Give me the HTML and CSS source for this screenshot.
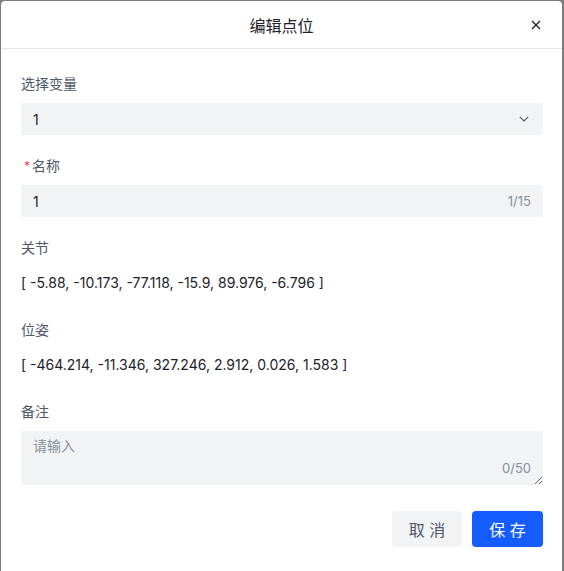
FILE: index.html
```html
<!DOCTYPE html>
<html lang="zh-CN">
<head>
  <meta charset="UTF-8" />
  <meta name="viewport" content="width=device-width, initial-scale=1.0" />
  <title>编辑点位</title>
  <link rel="stylesheet" href="styles.css">
</head>
<body>
  <div class="modal">
    <div class="modal-header">
      <span class="modal-title">编辑点位</span>
      <span class="modal-close">
        <svg width="10" height="10" viewBox="0 0 10 10">
          <path d="M1 1L9 9M9 1L1 9" stroke="#1d2129" stroke-width="1.3" fill="none" />
        </svg>
      </span>
    </div>

    <div class="modal-body">
      <div class="form-item">
        <div class="label">选择变量</div>
        <div class="field select">
          <span class="value">1</span>
          <svg class="arrow" width="10" height="6" viewBox="0 0 10 6">
            <path d="M0.8 0.8L5 5L9.2 0.8" stroke="#4e5969" stroke-width="1.1" fill="none" />
          </svg>
        </div>
      </div>

      <div class="form-item">
        <div class="label"><span class="required">*</span>名称</div>
        <div class="field">
          <span class="value">1</span>
          <span class="count">1/15</span>
        </div>
      </div>

      <div class="form-item">
        <div class="label">关节</div>
        <div class="text">[ -5.88, -10.173, -77.118, -15.9, 89.976, -6.796 ]</div>
      </div>

      <div class="form-item">
        <div class="label">位姿</div>
        <div class="text">[ -464.214, -11.346, 327.246, 2.912, 0.026, 1.583 ]</div>
      </div>

      <div class="form-item">
        <div class="label">备注</div>
        <div class="textarea-wrap">
          <textarea placeholder="请输入" maxlength="50"></textarea>
          <span class="count count-area">0/50</span>
        </div>
      </div>
    </div>

    <div class="modal-footer">
      <button class="btn btn-secondary">取 消</button>
      <button class="btn btn-primary">保 存</button>
    </div>
  </div>
</body>
</html>
```

FILE: styles.css
```css
* {
  margin: 0;
  padding: 0;
  box-sizing: border-box;
  font-family: Inter, 'Noto Sans CJK SC', sans-serif;
}

body {
  background: #7d7d7d;
  padding: 1px 0 0 1px;
  height: 100vh;
  overflow: hidden;
}

.modal {
  width: 561px;
  height: 580px;
  background: #fff;
  border-radius: 4px 4px 0 0;
}

.modal-header {
  height: 48px;
  border-bottom: 1px solid #e5e6eb;
  display: flex;
  align-items: center;
  justify-content: center;
  position: relative;
}

.modal-title {
  font-size: 16px;
  font-weight: 400;
  color: #1d2129;
}

.modal-close {
  position: absolute;
  right: 20px;
  top: 18px;
  width: 12px;
  height: 12px;
  display: flex;
  align-items: center;
  justify-content: center;
}

.modal-body {
  padding: 24px 19px 26px 20px;
}

.form-item {
  margin-bottom: 20px;
}

.form-item:last-child {
  margin-bottom: 0;
}

.label {
  height: 22px;
  font-size: 14px;
  line-height: 22px;
  color: #4e5969;
  margin-bottom: 8px;
  display: flex;
  align-items: center;
}

.required {
  color: #f53f3f;
  font-size: 12px;
  margin: 0 2px 0 3px;
}

.field {
  height: 32px;
  background: #f2f3f5;
  border-radius: 2px;
  display: flex;
  align-items: center;
  justify-content: space-between;
  padding: 0 12px;
}

.select {
  padding-right: 14px;
}

.value {
  font-size: 14px;
  color: #1d2129;
}

.count {
  font-size: 13px;
  color: #86909c;
}

.text {
  font-size: 14px;
  line-height: 32px;
  color: #1d2129;
}

.textarea-wrap {
  position: relative;
  height: 54px;
}

textarea {
  display: block;
  width: 100%;
  height: 54px;
  border: none;
  outline: none;
  background: #f2f3f5;
  border-radius: 2px;
  padding: 4px 12px;
  font-size: 14px;
  line-height: 22px;
  color: #1d2129;
  resize: vertical;
}

textarea::placeholder {
  color: #86909c;
}

.count-area {
  position: absolute;
  right: 12px;
  bottom: 9px;
}

.modal-footer {
  display: flex;
  justify-content: flex-end;
  gap: 10px;
  padding: 0 19px 0 20px;
}

.btn {
  height: 36px;
  padding: 0 16px;
  border: none;
  border-radius: 4px;
  font-size: 16px;
  cursor: pointer;
}

.btn-secondary {
  background: #f2f3f5;
  color: #4e5969;
  width: 70px;
}

.btn-primary {
  background: #165dff;
  color: #fff;
  width: 71px;
}
```
